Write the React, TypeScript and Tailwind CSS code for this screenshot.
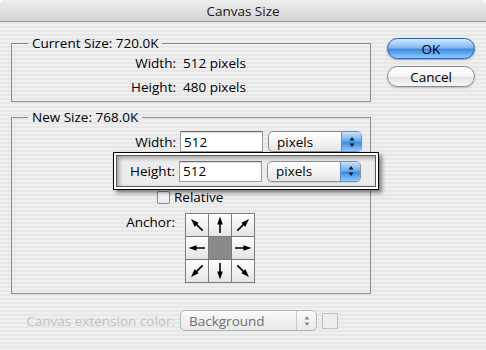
import React from 'react';

const font = "font-['Open_Sans',sans-serif] text-[13.5px] leading-[18px]";

const Arrow = ({ deg }: { deg: number }) => (
    <svg width="22" height="22" viewBox="0 0 22 22">
        <g transform={`rotate(${deg} 11 11)`}>
            <line x1="11" y1="19" x2="11" y2="8" stroke="#000" strokeWidth="1.6" />
            <polygon points="11,2.5 8.2,10.5 13.8,10.5" fill="#000" />
        </g>
    </svg>
);

const StepperArrows = ({ color }: { color: string }) => (
    <svg width="8" height="12" viewBox="0 0 8 12">
        <polygon points="4,1 1.5,4.5 6.5,4.5" fill={color} />
        <polygon points="4,11 1.5,7.5 6.5,7.5" fill={color} />
    </svg>
);

const UnitPopup = () => (
    <div className="flex h-[21px] w-[94px] items-center rounded-[5px] border border-[#8d8d8d] bg-[linear-gradient(180deg,#ffffff_0%,#f4f4f4_50%,#e6e6e6_100%)] pl-[8px] shadow-[0_1px_1px_rgba(0,0,0,0.12)]">
        <span>pixels</span>
        <div className="ml-auto flex h-full w-[20px] items-center justify-center rounded-r-[4px] border-l border-[#5a8fd0] bg-[linear-gradient(180deg,#c6e2ff_0%,#6aaef2_45%,#3b8be3_55%,#8fcaff_100%)]">
            <StepperArrows color="#111" />
        </div>
    </div>
);

const NumberInput = ({ value }: { value: string }) => (
    <div className="flex h-[21px] w-[83px] items-center border border-[#9a9a9a] border-t-[#6e6e6e] bg-white pl-[3px] shadow-[inset_0_1px_1px_rgba(0,0,0,0.15)]">
        {value}
    </div>
);

const App = () => {
    const arrows = [-45, 0, 45, -90, null, 90, -135, 180, 135];

    return (
        <div className={`${font} h-[350px] w-[486px] overflow-hidden rounded-t-[5px] bg-[repeating-linear-gradient(180deg,#efefef_0px,#efefef_2px,#e7e7e7_2px,#e7e7e7_4px)] text-black`}>
            {/* Title bar */}
            <div className="flex h-[22px] items-center justify-center border-b border-[#979797] bg-[linear-gradient(180deg,#eeeeee_0%,#e0e0e0_50%,#d2d2d2_100%)]">
                <span className="text-[#1a1a1a]">Canvas Size</span>
            </div>

            <div className="flex">
                {/* Left column */}
                <div className="w-[371px] pl-[11px] pt-[12px]">
                    <fieldset className="border border-[#8c8c8c] pb-[5px] pt-[2px]">
                        <legend className="ml-[16px] px-[4px]">Current Size: 720.0K</legend>
                        <div className="flex flex-col gap-[6px]">
                            <div className="flex">
                                <span className="w-[164px] text-right">Width:</span>
                                <span className="ml-[7px]">512 pixels</span>
                            </div>
                            <div className="flex">
                                <span className="w-[164px] text-right">Height:</span>
                                <span className="ml-[7px]">480 pixels</span>
                            </div>
                        </div>
                    </fieldset>

                    <fieldset className="mt-[6px] border border-[#8c8c8c] pb-[10px] pt-[5px]">
                        <legend className="ml-[16px] px-[4px]">New Size: 768.0K</legend>

                        <div className="flex items-center">
                            <span className="w-[164px] text-right">Width:</span>
                            <div className="ml-[4px]">
                                <NumberInput value="512" />
                            </div>
                            <div className="ml-[5px]">
                                <UnitPopup />
                            </div>
                        </div>

                        {/* Highlighted height row */}
                        <div className="relative z-10 -mr-[9px] ml-[101px] border border-black bg-white p-[2px] shadow-[3px_3px_4px_rgba(0,0,0,0.45)]">
                            <div className="flex h-[32px] items-center border border-[#5a5a5a] bg-[#ececec] shadow-[inset_2px_2px_4px_rgba(0,0,0,0.35)]">
                                <span className="w-[58px] text-right">Height:</span>
                                <div className="ml-[4px]">
                                    <NumberInput value="512" />
                                </div>
                                <div className="ml-[5px]">
                                    <UnitPopup />
                                </div>
                            </div>
                        </div>

                        <div className="flex h-[14px] items-center">
                            <div className="ml-[145px] h-[13px] w-[13px] rounded-[2px] border border-[#8a8a8a] bg-[linear-gradient(180deg,#ffffff,#e8e8e8)]" />
                            <span className="ml-[4px]">Relative</span>
                        </div>

                        <div className="mt-[9px] flex items-start">
                            <span className="w-[163px] text-right">Anchor:</span>
                            <div className="ml-[10px] grid grid-cols-[22px_22px_22px] gap-px bg-[#7b7b7b] p-px">
                                {arrows.map((deg, i) =>
                                    deg === null ? (
                                        <div key={i} className="h-[22px] w-[22px] bg-[#8a8a8a]" />
                                    ) : (
                                        <div key={i} className="h-[22px] w-[22px] bg-[linear-gradient(180deg,#ffffff,#e4e4e4)]">
                                            <Arrow deg={deg} />
                                        </div>
                                    )
                                )}
                            </div>
                        </div>
                    </fieldset>

                    <div className="mt-[16px] flex items-center">
                        <span className="w-[164px] text-right text-[#c2c2c2]">Canvas extension color:</span>
                        <div className="ml-[5px] flex h-[21px] w-[137px] items-center rounded-[5px] border border-[#b5b5b5] bg-[linear-gradient(180deg,#fbfbfb_0%,#f1f1f1_50%,#e9e9e9_100%)] pl-[8px] text-[#707070]">
                            <span>Background</span>
                            <div className="ml-auto flex h-full w-[20px] items-center justify-center border-l border-[#c8c8c8]">
                                <StepperArrows color="#8a8a8a" />
                            </div>
                        </div>
                        <div className="ml-[5px] h-[16px] w-[16px] border border-[#c0c0c0] bg-[#eeeeee]" />
                    </div>
                </div>

                {/* Buttons */}
                <div className="ml-[16px] flex w-[88px] flex-col gap-[7px] pt-[16px]">
                    <button className="flex h-[21px] items-center justify-center rounded-full border border-[#2d5fa6] bg-[linear-gradient(180deg,#d3e9ff_0%,#83bbf3_45%,#3f8ce2_55%,#8ecbff_100%)] shadow-[0_1px_2px_rgba(0,0,0,0.3)]">
                        OK
                    </button>
                    <button className="flex h-[21px] items-center justify-center rounded-full border border-[#8a8a8a] bg-[linear-gradient(180deg,#ffffff_0%,#f6f6f6_45%,#e3e3e3_55%,#f8f8f8_100%)] shadow-[0_1px_2px_rgba(0,0,0,0.2)]">
                        Cancel
                    </button>
                </div>
            </div>
        </div>
    );
};

export default App;
